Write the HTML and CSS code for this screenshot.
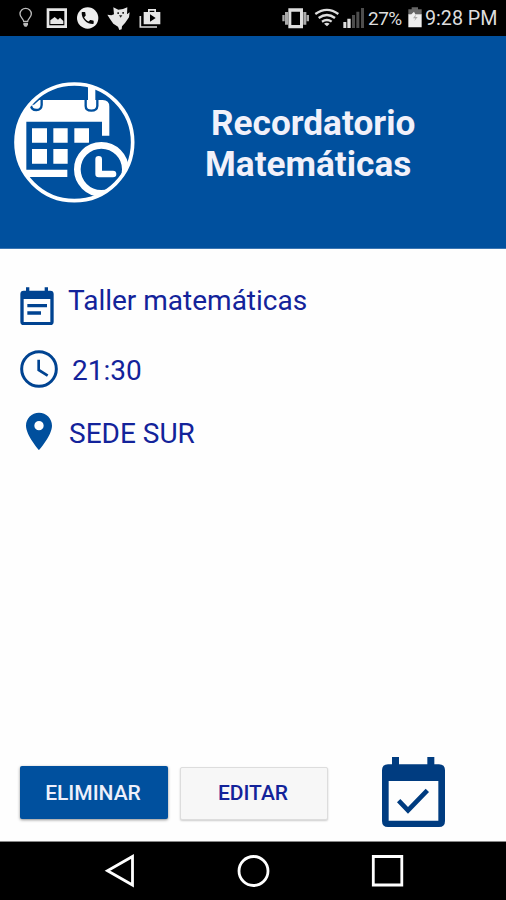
FILE: index.html
```html
<!DOCTYPE html>
<html lang="es">
<head>
    <meta charset="UTF-8">
    <meta name="viewport" content="width=device-width, initial-scale=1.0">
    <title>Recordatorio Matemáticas</title>
    <link rel="stylesheet" href="styles.css">
</head>
<body>
    <div class="status-bar">
        <svg class="status-left" width="170" height="36" viewBox="0 0 510 108">
            <!-- bulb -->
            <path d="M71 64c0-7-11-12-11-22a17 17 0 0 1 34 0c0 10-11 15-11 22z" fill="none" stroke="#bbb" stroke-width="4"/>
            <path d="M70 68h14v6l-4 6h-6l-4-6z" fill="#bbb"/>
            <!-- image -->
            <path d="M140 25h61v59h-61zM148 33v43h45V33z" fill="#e6e6e6" fill-rule="evenodd"/>
            <path d="M151 72V61l13-10 10 8 6-6 10 10v9z" fill="#e6e6e6"/>
            <!-- phone -->
            <circle cx="263" cy="54" r="32" fill="#eee"/>
            <path transform="translate(239 30) scale(2)" d="M6.6 10.8c1.4 2.8 3.8 5.1 6.6 6.6l2.2-2.2c.3-.3.7-.4 1-.2 1.1.4 2.3.6 3.6.6.6 0 1 .4 1 1V20c0 .6-.4 1-1 1C10.600 21 3 13.400 3 4c0-.6.4-1 1-1h3.500c.6 0 1 .4 1 1 0 1.200.2 2.400.6 3.600.1.300 0 .7-.2 1z" fill="#050505"/>
            <!-- bird -->
            <path d="M340 22l15 7 14-2 13-5-1 21 8-6-2 15-12 17-9 10-1 9-7 2-4-10-14-9-10-14-8-13 12 2 8-3z" fill="#e6e6e6"/>
            <path d="M352 37h5v5h-5zM367 36h5v5h-5zM357 46h10l-5 7z" fill="#222"/>
            <!-- briefcase -->
            <path d="M421 48v33h50" fill="none" stroke="#ddd" stroke-width="5"/>
            <path d="M431 36h13v-9h24v9h13v37h-50zM449 36h14v-4h-14zM450 43v22l17-11z" fill="#e6e6e6" fill-rule="evenodd"/>
        </svg>
        <div class="status-right">
            <svg width="98" height="36" viewBox="0 0 294 108">
                <!-- vibrate -->
                <path d="M55 25h44v60H55zM64 35v40h26V35z" fill="#ddd" fill-rule="evenodd"/>
                <path d="M45 36h9v38h-9zM100 36h9v38h-9zM37 45h7v19h-7zM110 45h7v19h-7z" fill="#aaa"/>
                <!-- wifi -->
                <g fill="none" stroke="#ddd" stroke-width="7">
                    <path d="M136 42q35-25 69 0"/>
                    <path d="M146 54q25-18 49 0"/>
                    <path d="M156 65q15-10 29 0"/>
                </g>
                <path d="M162 71q8-6 17 0l-8 8z" fill="#ddd"/>
                <!-- signal -->
                <path d="M220 66h9v18h-9zM232 56h10v28h-10z" fill="#ddd"/>
                <path d="M246 45h9v39h-9zM259 35h9v49h-9zM273 24h9v60h-9z" fill="#4d4d4d"/>
            </svg>
            <span class="percent">27%</span>
            <svg class="battery" width="14" height="22" viewBox="0 0 42 66">
                <path d="M11 1h19v6h11v16H1V7h10z" fill="#666"/>
                <path d="M1 22h9l8-8 4 8h19v39H1z" fill="#eee"/>
                <path d="M24 22l-9 12h7l-3 8 10-12h-7z" fill="#aaa"/>
            </svg>
            <span class="time">9:28 PM</span>
        </div>
    </div>

    <header class="header">
        <svg class="logo" width="150" height="145" viewBox="0 0 450 435">
            <defs>
                <clipPath id="round"><circle cx="223" cy="217" r="176"/></clipPath>
            </defs>
            <g clip-path="url(#round)">
                <path d="M40 90h268q20 0 20 20v87h-22v-42H79v144h123v22H40z" fill="#fff"/>
                <path d="M93 106q1 14 16 14t16-15V86M257 86v22q0 14 17 14t18-14V86" fill="none" stroke="#00509e" stroke-width="7"/>
                <path d="M264 45h22v61q0 10-11 10t-11-10z" fill="#fff"/>
                <path d="M79 62h44v28h-5l-16 14H79z" fill="#00509e"/>
                <path d="M96 175h45v43H96zM160 175h43v43h-43zM223 175h44v43h-44zM96 237h45v44H96zM160 237h43v44h-43z" fill="#fff"/>
                <circle cx="304" cy="300" r="90" fill="#00509e"/>
                <circle cx="304" cy="298" r="72" fill="none" stroke="#fff" stroke-width="20"/>
                <path d="M296 268v44h43" fill="none" stroke="#fff" stroke-width="20" stroke-linecap="round" stroke-linejoin="round"/>
            </g>
            <circle cx="223" cy="217" r="175" fill="none" stroke="#fff" stroke-width="11"/>
        </svg>
        <h1 class="title"><span class="title-top">Recordatorio</span><span class="title-sub">Matemáticas</span></h1>
    </header>

    <main class="content">
        <div class="row row-name">
            <svg width="60" height="60" viewBox="0 0 180 180">
                <path d="M78 22h10v10h46V22h10v10h7q10 0 10 10v83q0 10-10 10H71q-10 0-10-10V42q0-10 10-10h7zM71 57v69h80V57z" fill="#004391" fill-rule="evenodd"/>
                <path d="M82 72h59v10H82zM82 94h41v10H82z" fill="#004391"/>
            </svg>
            <span>Taller matemáticas</span>
        </div>
        <div class="row row-time">
            <svg width="60" height="60" viewBox="0 0 180 180">
                <circle cx="117" cy="87" r="52" fill="none" stroke="#004391" stroke-width="9"/>
                <path d="M116 59v31l27 17" fill="none" stroke="#004391" stroke-width="8"/>
            </svg>
            <span>21:30</span>
        </div>
        <div class="row row-place">
            <svg width="60" height="60" viewBox="0 0 180 180">
                <path d="M117 29c-22 0-39 17-39 39 0 29 39 73 39 73s39-44 39-73c0-22-17-39-39-39zm0 53a14 14 0 1 1 0-28 14 14 0 0 1 0 28z" fill="#004f9d" fill-rule="evenodd"/>
            </svg>
            <span>SEDE SUR</span>
        </div>
    </main>

    <footer class="actions">
        <button class="btn btn-delete">ELIMINAR</button>
        <button class="btn btn-edit">EDITAR</button>
        <svg class="check" width="63" height="70" viewBox="0 0 189 210">
            <path d="M30 0h21v22h85V0h21v22h14q18 0 18 18v152q0 18-18 18H18q-18 0-18-18V40q0-18 18-18h12zM20 72v119h149V72z" fill="#003c80" fill-rule="evenodd"/>
            <path d="M50 131l28 29 58-60" fill="none" stroke="#003c80" stroke-width="14"/>
        </svg>
    </footer>

    <nav class="nav-bar">
        <svg width="506" height="58" viewBox="0 842 506 58" fill="none" stroke="#fff" stroke-width="2.800">
            <path d="M132.500 856.500v28.500l-25-14.200z"/>
            <circle cx="253.500" cy="871" r="14.500"/>
            <path d="M373.300 856.500h28.500v28.500h-28.500z"/>
        </svg>
    </nav>
</body>
</html>
```
FILE: styles.css
```css
* {
    box-sizing: border-box;
}
body {
    font-family: Roboto, "Liberation Sans", sans-serif;
    margin: 0;
    height: 900px;
    display: flex;
    flex-direction: column;
    background-color: #fefefe;
    overflow: hidden;
}
svg {
    display: block;
    flex: none;
}
.status-bar {
    height: 36px;
    flex: none;
    display: flex;
    justify-content: space-between;
    background-color: #000;
    color: #ddd;
}
.status-right {
    display: flex;
    width: 236px;
    font-size: 19.7px;
    line-height: 38px;
    white-space: nowrap;
}
.percent {
    width: 40px;
    font-size: 19px;
    letter-spacing: -0.5px;
}
.battery {
    margin-top: 7px;
}
.time {
    margin-left: 3px;
}
.header {
    height: 213px;
    flex: none;
    display: flex;
    background-color: #00509e;
    border-bottom: 1px solid #3b76b3;
}
.logo {
    margin-top: 34px;
}
.title {
    margin: 67px 0 0 55px;
    color: #f1f1fa;
    font-size: 35.2px;
    font-weight: bold;
    line-height: 41px;
}
.title span {
    display: block;
}
.title-top {
    padding-left: 6px;
}
.content {
    flex: 1;
    padding-top: 31px;
    color: #13239a;
    font-size: 28px;
    font-weight: 400;
}
.row {
    display: flex;
    height: 60px;
    line-height: 42px;
}
.row-name span {
    padding-left: 8px;
}
.row-time span {
    padding: 10px 0 0 12px;
}
.row-place {
    margin-top: 3px;
}
.row-place span {
    padding: 10px 0 0 9px;
}
.actions {
    height: 85px;
    flex: none;
    display: flex;
    padding-left: 20px;
    border-bottom: 1px solid #888;
}
.btn {
    width: 148px;
    height: 53px;
    margin-top: 9px;
    padding: 0;
    border: 0;
    border-radius: 2px;
    font-family: inherit;
    font-size: 21px;
    font-weight: 500;
}
.btn-delete {
    padding-right: 2px;
    background-color: #00509e;
    color: #eef0fb;
    box-shadow: 0 1px 3px rgba(0, 0, 0, 0.45);
}
.btn-edit {
    margin: 10px 0 0 12px;
    padding: 0 2px 2px 0;
    background-color: #f7f7f7;
    color: #13239a;
    border: 1px solid #ddd;
    box-shadow: 0 1px 2px rgba(0, 0, 0, 0.2);
}
.check {
    margin-left: 54px;
}
.nav-bar {
    height: 58px;
    flex: none;
    background-color: #000;
}
```
